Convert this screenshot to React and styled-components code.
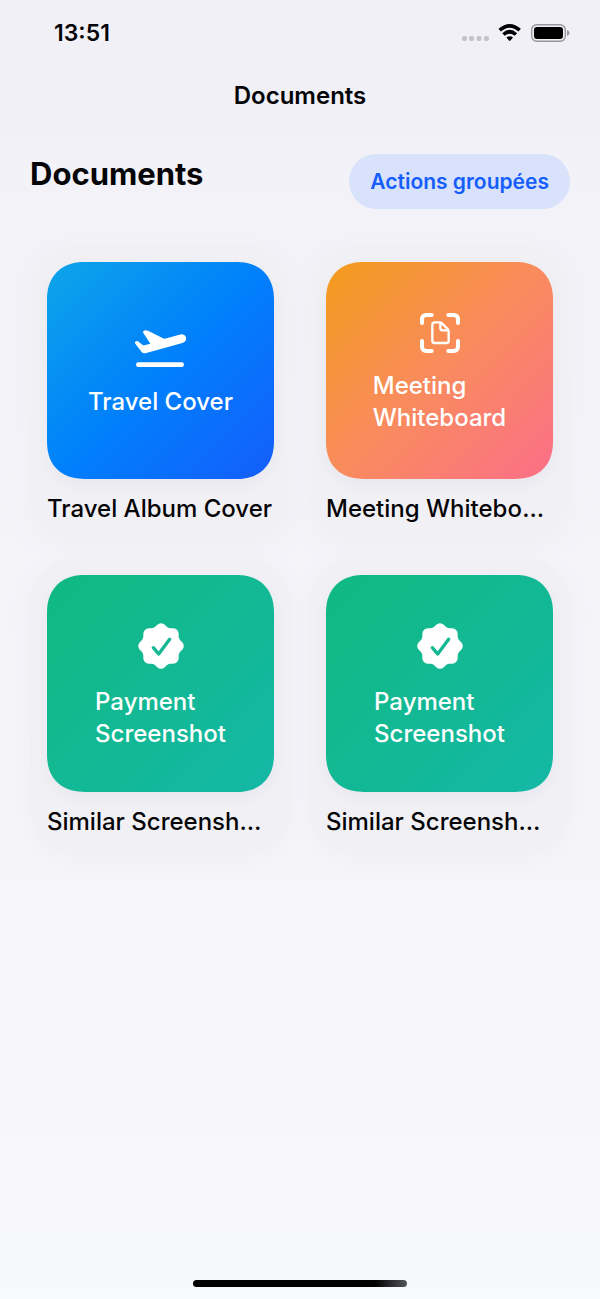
import React from "react";
import styled, { createGlobalStyle } from "styled-components";

const documents = [
  {
    id: 1,
    label: "Travel Cover",
    title: "Travel Album Cover",
    icon: "travel",
    colors: "#0ea5e9, #0080fb 50%, #155dfc",
  },
  {
    id: 2,
    label: "Meeting\nWhiteboard",
    title: "Meeting Whiteboard",
    icon: "scan",
    colors: "#f39c1b, #f98b5e 50%, #fb6f88",
  },
  {
    id: 3,
    label: "Payment\nScreenshot",
    title: "Similar Screenshot A",
    icon: "seal",
    colors: "#10b981, #14b8a6",
  },
  {
    id: 4,
    label: "Payment\nScreenshot",
    title: "Similar Screenshot B",
    icon: "seal",
    colors: "#10b981, #14b8a6",
  },
];

const TravelIcon = () => (
  <svg width="54" height="40" viewBox="42 56 162 120" fill="#fff" aria-hidden="true">
    <path d="M72 61 Q77 58 84 61 L129 84 Q134 86 140 84 L178 73 Q193 69 198 80 Q201 93 187 98 L79 128 Q70 131 65 125 L46 100 Q43 96 46 94 Q51 90 56 94 L67 103 Q71 106 76 104 L91 100 L70 68 Q67 64 72 61Z" />
    <rect x="48" y="156" width="144" height="14" rx="7" />
  </svg>
);

const ScanIcon = () => (
  <svg
    width="40"
    height="40"
    viewBox="60 54 120 120"
    fill="none"
    stroke="#fff"
    strokeLinecap="round"
    strokeLinejoin="round"
    aria-hidden="true"
  >
    <path
      strokeWidth="12"
      d="M66 84V74Q66 60 80 60H95M145 60H160Q174 60 174 74V84M174 138V154Q174 168 160 168H145M95 168H80Q66 168 66 154V138"
    />
    <path
      strokeWidth="7"
      d="M104 82H120Q123 82 126 85L143 102Q146 105 146 108V137Q146 144 139 144H104Q97 144 97 137V89Q97 82 104 82ZM121 83V99Q121 106 128 106H145"
    />
  </svg>
);

const SealIcon = () => (
  <svg width="46" height="46" viewBox="51 39 138 138" aria-hidden="true">
    <g fill="#fff">
      <rect x="67" y="55" width="106" height="106" rx="16" />
      <rect x="67" y="55" width="106" height="106" rx="16" transform="rotate(45 120 108)" />
      <circle cx="120" cy="108" r="59" />
    </g>
    <path
      d="M97 113L113 132L146 88"
      fill="none"
      stroke="#13b892"
      strokeWidth="10"
      strokeLinecap="round"
      strokeLinejoin="round"
    />
  </svg>
);

const icons = { travel: TravelIcon, scan: ScanIcon, seal: SealIcon };

const StatusIcons = () => (
  <svg width="108" height="20" viewBox="0 0 108 20" aria-hidden="true">
    <g fill="#c3c3c7">
      <rect x="0" y="13" width="5" height="5" rx="2" />
      <rect x="7" y="13" width="5" height="5" rx="2" />
      <rect x="14.500" y="13" width="5" height="5" rx="2" />
      <rect x="22" y="13" width="5" height="5" rx="2" />
    </g>
    <g fill="none" stroke="#000" strokeWidth="3.600">
      <path d="M37.700 7.200Q47.700 -1.400 57.700 7.200" />
      <path d="M41.500 11.500Q47.700 6 53.900 11.500" />
    </g>
    <path d="M44.400 14.600Q47.700 12 51 14.600L48.400 17.600Q47.700 18.300 47 17.600Z" />
    <rect x="69.700" y="1.700" width="33.600" height="16.600" rx="5" fill="none" stroke="#97979b" strokeWidth="1.400" />
    <rect x="72" y="4" width="29" height="12" rx="3" />
    <path d="M105 7Q107.500 8 107.500 10T105 13Z" fill="#97979b" />
  </svg>
);

const DocumentCard = ({ item }) => {
  const Icon = icons[item.icon];

  return (
    <Card>
      <Tile $colors={item.colors}>
        <Icon />
        <TileLabel>{item.label}</TileLabel>
      </Tile>
      <CardTitle>{item.title}</CardTitle>
    </Card>
  );
};

const App = () => {
  return (
    <>
      <GlobalStyle />
      <Page>
        <Header>
          <StatusBar>
            <Time>13:51</Time>
            <StatusIcons />
          </StatusBar>
          <NavTitle>Documents</NavTitle>
        </Header>
        <Main>
          <TitleRow>
            <Heading>Documents</Heading>
            <ActionButton type="button">Actions groupées</ActionButton>
          </TitleRow>
          <Grid>
            {documents.map((item) => (
              <DocumentCard key={item.id} item={item} />
            ))}
          </Grid>
        </Main>
        <HomeIndicator />
      </Page>
    </>
  );
};

export default App;

const GlobalStyle = createGlobalStyle`
  * {
    box-sizing: border-box;
  }

  body {
    margin: 0;
    color: #050507;
    font-family: Inter, "Liberation Sans", sans-serif;
  }
`;

const Page = styled.div`
  display: flex;
  flex-direction: column;
  min-height: 100vh;
  background: linear-gradient(#f2f1f7, #f5f5fa 70%, #f8f9fb);
`;

const Header = styled.header`
  background: #f1f0f6;
`;

const StatusBar = styled.div`
  display: flex;
  align-items: center;
  justify-content: space-between;
  height: 66px;
  padding: 0 30px 0 54px;
`;

const Time = styled.span`
  font-size: 23px;
  font-weight: 600;
`;

const NavTitle = styled.div`
  height: 76px;
  line-height: 60px;
  font-size: 24px;
  font-weight: 600;
  text-align: center;
`;

const Main = styled.main`
  padding: 12px 30px 24px;
`;

const TitleRow = styled.div`
  display: flex;
  align-items: flex-start;
  justify-content: space-between;
  margin-bottom: 36px;
`;

const Heading = styled.h1`
  margin: 0;
  line-height: 40px;
  font-size: 31px;
  font-weight: 700;
`;

const ActionButton = styled.button`
  height: 55px;
  padding: 0 21px;
  border: none;
  border-radius: 28px;
  background: #d8e2fa;
  color: #155dfc;
  font-family: inherit;
  font-size: 21px;
  font-weight: 600;
  cursor: pointer;
`;

const Grid = styled.div`
  display: grid;
  grid-template-columns: repeat(2, minmax(0, 1fr));
  gap: 18px;
`;

const Card = styled.article`
  padding: 17px 17px 15px;
  border-radius: 44px;
  background: #f1f0f5;
  box-shadow: 0 8px 24px #f0eff4;
`;

const Tile = styled.div`
  display: flex;
  flex-direction: column;
  align-items: center;
  justify-content: center;
  gap: 17px;
  height: 217px;
  padding-top: 6px;
  border-radius: 38px;
  corner-shape: superellipse(1.2);
  background: linear-gradient(135deg, ${(props) => props.$colors});
  box-shadow: 0 6px 18px rgba(30, 30, 80, 0.04);
`;

const TileLabel = styled.span`
  color: #fff;
  line-height: 32px;
  font-size: 24px;
  font-weight: 500;
  white-space: pre-line;
`;

const CardTitle = styled.h2`
  margin: 14px 0 0;
  overflow: hidden;
  line-height: 32px;
  font-size: 24px;
  font-weight: 500;
  text-overflow: ellipsis;
  white-space: nowrap;
`;

const HomeIndicator = styled.div`
  width: 214px;
  height: 7px;
  margin: auto auto 12px;
  border-radius: 4px;
  background: linear-gradient(90deg, #000 85%, #55565a);
`;
